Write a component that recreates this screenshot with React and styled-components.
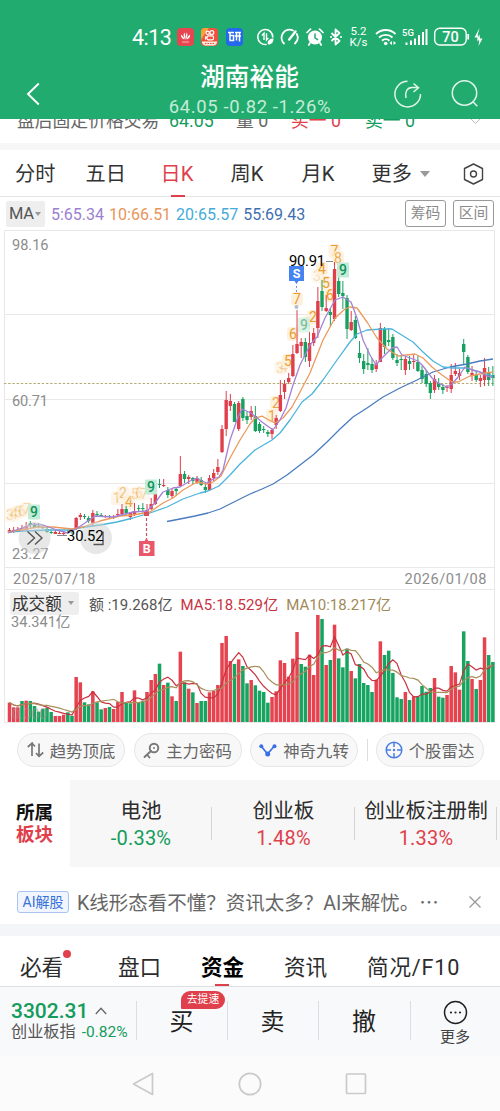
import React from "react";
import styled, { createGlobalStyle } from "styled-components";

const RED = "#e0404c";
const GREEN = "#149c5c";

const GlobalStyle = createGlobalStyle`
  body {
    margin: 0;
    background: #fff;
    font-family: Roboto, "Noto Sans CJK SC", sans-serif;
    color: #333;
    overflow: hidden;
  }
  * {
    box-sizing: border-box;
  }
  svg {
    display: block;
    flex: none;
  }
`;

const Page = styled.div`
  width: 500px;
  height: 1111px;
  display: flex;
  flex-direction: column;
  overflow: hidden;
  white-space: nowrap;
`;

const Header = styled.header`
  height: 119px;
  flex: none;
  background: #22ab6f;
  color: #fff;
  position: relative;
`;

const StatusBar = styled.div`
  height: 60px;
  padding: 14px 0 0 132px;
  display: flex;
  align-items: center;
`;

const StatusItem = styled.div`
  flex: none;
  width: ${(props) => props.$w}px;
  margin-left: ${(props) => props.$ml || 0}px;
`;

const Clock = styled(StatusItem)`
  font-size: 21.5px;
  line-height: 24px;
  letter-spacing: -0.5px;
  padding-top: 1px;
`;

const NetSpeed = styled(StatusItem)`
  font-size: 11.5px;
  line-height: 11px;
  text-align: center;
`;

const TitleRow = styled.div`
  display: grid;
  grid-template-columns: 120px 1fr 120px;
  height: 59px;
`;

const TitleIcons = styled.div`
  display: flex;
  align-items: center;
  gap: 29px;
  padding-top: 8px;
  padding-left: ${(props) => props.$pl}px;
`;

const TitleText = styled.div`
  text-align: center;
`;

const StockName = styled.div`
  font-size: 24.7px;
  line-height: 36px;
  font-weight: 500;
  margin-left: -1px;
`;

const StockQuote = styled.div`
  font-size: 18.4px;
  line-height: 22px;
  letter-spacing: 0.65px;
  color: #c5ecd9;
`;

const AfterHours = styled.div`
  height: 24px;
  flex: none;
  overflow: hidden;
`;

const AfterHoursLine = styled.div`
  margin-top: -12px;
  height: 28px;
  line-height: 28px;
  padding-left: 17px;
  font-size: 17.8px;
  color: #666;
  display: grid;
  grid-template-columns: 152px 67px 55px 74px 104px 1fr;
  align-items: center;
`;

const Tint = styled.span`
  color: ${(props) => props.$c};
  letter-spacing: ${(props) => props.$ls || 0}px;
  margin-left: ${(props) => props.$ml || 0}px;
`;

const Band = styled.div`
  flex: none;
  height: ${(props) => props.$h}px;
  background: ${(props) => props.$bg};
`;

const PeriodTabs = styled.nav`
  flex: none;
  height: 47px;
  border-bottom: 1px solid #e4e4e4;
  padding-left: 15px;
  display: grid;
  grid-template-columns: 70.5px 75px 70px 71px 70px 91.5px 1fr;
  align-items: stretch;
`;

const PeriodTab = styled.div`
  font-size: 20.2px;
  line-height: 46px;
  padding-top: 1px;
  color: ${(props) => (props.$active ? RED : "#333")};
  display: flex;
  align-items: center;
  gap: 8px;
  position: relative;
`;

const Underline = styled.i`
  position: absolute;
  bottom: 0;
  left: ${(props) => props.$left}px;
  width: 14px;
  height: 2px;
  background: ${RED};
`;

const Triangle = styled.i`
  border: ${(props) => props.$s}px solid transparent;
  border-top: ${(props) => props.$s + 1}px solid #999;
  border-bottom: 0;
`;

const MaRow = styled.div`
  flex: none;
  height: 33px;
  padding: 0 6px;
  display: flex;
  align-items: center;
  font-size: 16px;
`;

const MaSelect = styled.div`
  width: 39px;
  height: 26px;
  padding-left: 3px;
  background: #eeeeee;
  border-radius: 2px;
  color: #555;
  display: flex;
  align-items: center;
  gap: 1px;
  margin-right: 6px;
  font-size: 16.5px;
  letter-spacing: -0.3px;
`;

const MaValue = styled.span`
  color: ${(props) => props.$c};
  margin-right: 5px;
  padding-top: 1px;
`;

const OutlineButton = styled.div`
  width: 41px;
  height: 27px;
  margin-left: ${(props) => props.$ml};
  border: 1px solid #999;
  border-radius: 3px;
  color: #8a8a8a;
  font-size: 14.8px;
  line-height: 25px;
  text-align: center;
`;

const VolumeBox = styled.section`
  flex: none;
  height: 133px;
  margin: 0 5px 0 4px;
  border: 1px solid #e8e8e8;
  border-top: 0;
  position: relative;
`;

const VolumeHead = styled.div`
  display: flex;
  align-items: center;
  height: 25px;
  padding: 1px 0 0 5px;
  font-size: 15px;
`;

const VolumeSelect = styled.div`
  width: 69px;
  height: 23px;
  background: #eee;
  border-radius: 3px;
  display: flex;
  align-items: center;
  gap: 6px;
  padding-left: 2px;
  font-size: 16.6px;
  margin-right: 10px;
`;

const VolumeScale = styled.div`
  font-size: 14.6px;
  line-height: 14px;
  padding-left: 6px;
  color: #8c8c8c;
`;

const VolumeSvg = styled.svg`
  position: absolute;
  left: -5px;
  bottom: 0;
`;

const Chips = styled.div`
  flex: none;
  height: 57px;
  padding: 10px 0 0 17px;
  display: flex;
  align-items: flex-start;
`;

const Chip = styled.div`
  width: 108px;
  height: 34px;
  margin-right: 8.5px;
  border: 1px solid #e6e6e6;
  border-radius: 17px;
  background: #f8f8f8;
  color: #666;
  font-size: 16.4px;
  display: flex;
  align-items: center;
  justify-content: center;
  gap: 6px;
`;

const ChipDivider = styled.i`
  width: 1px;
  height: 22px;
  margin: 6px 8px 0 0;
  background: #ddd;
`;

const Sectors = styled.section`
  flex: none;
  height: 87px;
  display: flex;
`;

const SectorLabel = styled.div`
  width: 70px;
  padding: 22px 0 0 16px;
  font-size: 18.6px;
  line-height: 22px;
  font-weight: 700;
  color: #111;
`;

const SectorList = styled.div`
  flex: 1;
  display: flex;
  background: #f7f7f7;
  overflow: hidden;
`;

const Sector = styled.div`
  flex: none;
  width: ${(props) => props.$w}px;
  text-align: center;
  position: relative;
  padding-top: 18px;
  &::after {
    content: "";
    position: absolute;
    right: 0;
    top: 27px;
    width: 1px;
    height: 33px;
    background: #d4d4d4;
  }
`;

const SectorName = styled.div`
  font-size: 20.6px;
  line-height: 27px;
  color: #2c2c2c;
`;

const SectorChange = styled.div`
  font-size: 20px;
  line-height: 26px;
  letter-spacing: 0.2px;
  color: ${(props) => (props.$up ? RED : GREEN)};
`;

const Notice = styled.div`
  flex: none;
  height: 57px;
  padding: 13px 0 0 17px;
  display: flex;
  align-items: center;
  font-size: 19.5px;
  color: #666;
`;

const AiTag = styled.div`
  width: 52px;
  height: 22px;
  border: 1px solid #a9c4f0;
  border-radius: 3px;
  background: #f1f6fe;
  color: #3671d9;
  font-size: 14px;
  line-height: 20px;
  text-align: center;
  margin-right: 8px;
`;

const NoticeText = styled.div`
  width: 392px;
  margin-top: -2px;
`;

const SectionTabs = styled.nav`
  flex: none;
  height: 51px;
  padding: 0 0 0 20px;
  border-bottom: 1px solid #dedfe1;
  display: grid;
  grid-template-columns: 98px 83px 83px 83px 133px;
  grid-template-rows: 50px;
  font-size: 21.6px;
  line-height: 63px;
`;

const SectionTab = styled.div`
  position: relative;
  color: ${(props) => (props.$active ? "#000" : "#2c2c2c")};
  font-weight: ${(props) => (props.$active ? 700 : 400)};
  letter-spacing: ${(props) => props.$ls || 0}px;
`;

const RedDot = styled.i`
  position: absolute;
  left: 43px;
  top: 14px;
  width: 8px;
  height: 8px;
  border-radius: 50%;
  background: ${RED};
`;

const TradeBar = styled.footer`
  flex: none;
  height: 69px;
  background: #f8f9fb;
  display: flex;
`;

const IndexBox = styled.div`
  width: 136px;
  padding: 12px 0 0 11px;
`;

const IndexValue = styled.div`
  display: flex;
  align-items: center;
  gap: 7px;
  height: 24px;
  font-size: 21px;
  font-weight: 500;
  color: ${GREEN};
`;

const IndexName = styled.div`
  font-size: 16.2px;
  line-height: 18px;
  color: #555;
  display: flex;
  align-items: center;
  gap: 6px;
`;

const IndexChange = styled.span`
  font-size: 15.5px;
  color: ${GREEN};
`;

const TradeButton = styled.div`
  width: ${(props) => props.$w}px;
  position: relative;
  font-size: 24px;
  line-height: 70px;
  text-align: center;
  color: #222;
  &::before {
    content: "";
    position: absolute;
    left: 0;
    top: 14px;
    width: 1px;
    height: 39px;
    background: #dcdde0;
  }
`;

const MoreButton = styled(TradeButton)`
  display: flex;
  flex-direction: column;
  align-items: center;
  padding-top: 13px;
  font-size: 15px;
  line-height: 20px;
  color: #444;
  gap: 2px;
`;

const SpeedBadge = styled.span`
  position: absolute;
  left: 45px;
  top: 4px;
  width: 44px;
  height: 18px;
  border-radius: 9px 9px 9px 1px;
  background: ${RED};
  color: #fff;
  font-size: 10.8px;
  line-height: 17px;
`;

const SystemNav = styled.div`
  flex: 1;
  background: #fbfbfc;
  display: flex;
  justify-content: center;
  gap: 82px;
  padding-top: 16px;
`;

// turnover bars, measured down from a base line of 396
const volumes =
  "R338 R352 R352 G333 R332 G333 G348 G365 G357 G353 G366 R378 R378 R374 G367 G378 R261 R277 G337 G343 R304 G337 G358 R354 G351 R357 R336 R306 G336 G340 R301 G338 G332 R306 R270 R252 G221 R285 G278 R319 G333 R185 G278 R296 G307 R339 G333 G333 R307 R303 R285 R159 R138 R213 G222 R208 G228 G280 R270 G286 G302 G306 G338 R321 R304 R211 R219 R260 R206 R126 G222 G230 R194 R255 R75 G87 R225 G210 R104 G205 G232 G176 R243 G265 G222 G279 G285 G306 R269 R154 G195 G182 G249 G322 G327 R306 G330 R319 G319 G288 G305 G294 R264 G320 G323 R315 R228 R247 R299 G124 G213 R267 G297 R270 R142 G195 G216"
    .split(" ")
    .map((v) => ({ up: v[0] === "R", h: (396 - Number(v.slice(1))) / 3 }));

// high, body top, body bottom, low
const candles = [
  "R528,530,533,533 R527,530,532,533 R527,530,531,532 R525,528,531,532 R522,526,530,531 G521,523,525,527 G523,525,527,528 G523,526,527,528 G525,527,528,529 G527,529,532,533",
  "G530,532,533,534 R530,532,534,534 R531,533,534,534 R531,533,534,535 G530,532,533,534 G529,531,532,534 R517,518,529,530 R513,515,517,520 G514,516,517,519 G516,518,521,523",
  "R510,513,523,526 G511,514,515,517 G513,515,516,517 R515,516,517,518 G515,516,517,519 R515,517,518,519 R509,514,515,516 R504,509,514,516 G506,509,513,515 R512,513,517,520",
  "R503,511,515,516 G505,508,509,512 G503,508,509,513 R504,510,513,516 R498,504,509,510 R488,490,504,505 G479,484,485,488 R479,485,486,487 G487,490,495,498 R488,491,496,498",
  "G487,489,491,495 R456,474,486,487 G471,474,479,483 R475,477,479,484 G477,478,481,484 R476,478,482,484 G477,480,485,486 G484,487,490,493 R475,478,490,491 R469,473,478,481",
  "R459,467,472,475 R425,429,452,453 R391,400,429,436 R394,401,406,411 G402,404,422,422 R401,403,429,431 G397,399,418,421 G411,416,420,424 R406,411,417,420 G406,416,431,432",
  "G422,424,431,433 G426,429,430,433 G430,432,434,437 R428,430,434,439 R415,418,425,429 R380,395,411,412 R380,384,392,399 R373,378,382,384 R345,354,376,377 R310,344,353,354",
  "R338,342,346,358 G338,342,357,362 R332,343,361,367 R328,333,343,346 R287,301,328,338 G280,291,307,311 R295,308,311,312 G308,312,315,327 R262,269,319,321 G271,281,294,297",
  "G281,293,296,309 G295,298,329,339 R311,322,330,331 G316,320,338,339 G341,353,358,363 G354,361,369,374 G348,363,365,370 G358,364,370,373 R360,364,369,372 R323,328,362,362",
  "G327,329,347,354 G328,340,342,346 G334,337,358,360 G354,360,363,366 G356,359,360,370 R357,359,370,375 G356,361,364,370 R355,361,362,369 G356,362,371,372 G366,370,379,383",
  "G370,374,384,387 G381,383,393,399 R375,379,390,393 G378,383,387,390 G384,387,390,394 R385,387,388,392 R364,375,389,393 R363,371,374,376 R369,373,376,380 G339,344,352,365",
  "G355,357,372,374 R366,373,375,381 G371,375,380,382 R375,378,381,387 R358,368,380,386 G367,372,380,386 G366,375,378,386",
]
  .join(" ")
  .split(" ")
  .map((c) => ({ up: c[0] === "R", v: c.slice(1).split(",").map(Number) }));

const averages = [
  {
    color: "#4a7cc0",
    pts: "167,521.5 180,519 195,516 208,513 220,509 232,503 250,494 262,489 273,484 287,475 300,465 313,455 327,442 340,429 353,417 367,408 383,397 400,388 417,380 433,372 450,367 467,364 480,361 493,359",
  },
  {
    color: "#4cb4dc",
    pts: "8,532 25,531 50,530 68,530 85,527 100,525 117,522 133,518 150,513 167,507 183,499 200,493 208,491 219,486 230,475 240,464 255,450 272,440 280,433 290,420 302,402 312,394 323,380 337,360 350,342 357,334 367,330 383,329 392,329 400,334 413,342 423,352 433,361 443,367 453,368 467,368 480,372 493,376",
  },
  {
    color: "#ec9a5c",
    pts: "8,532 20,530 37,527 53,527 72,529 83,527 100,521 120,516 133,515 150,512 163,503 173,498 183,490 197,482 207,484 213,482 221,476 230,458 240,440 250,424 255,418 262,416 267,419 275,423 283,418 292,407 300,392 310,373 323,340 335,318 345,309 350,307 357,308 367,322 377,338 387,349 398,356 415,354 423,358 432,367 442,375 452,382 458,382 470,376 480,374 493,372",
  },
  {
    color: "#a482d6",
    pts: "8,533 13,531 25,527 33,524 43,525 57,530 68,533 76,529 85,523 95,516 113,517 133,512 147,511 155,503 163,492 173,488 180,487 190,481 197,478 202,481 207,483 213,479 219,477 223,470 230,440 238,417 242,409 251,413 262,422 273,430 280,420 286,408 293,385 300,365 310,345 317,337 325,318 335,300 343,297 351,302 357,318 363,340 370,355 376,365 382,358 387,353 392,348 397,347 402,355 410,358 418,361 423,366 432,378 438,383 447,387 452,384 458,377 465,367 472,370 480,372 487,376 493,377",
  },
];

// x centre, y centre, digit, opacity
const counts = [
  [10, 515, "3", 0.45],
  [14, 514, "4", 0.45],
  [18, 512, "5", 0.4],
  [22, 511, "6", 0.4],
  [27, 509, "7", 0.4],
  [117, 498, "1", 0.6],
  [123, 493, "2", 0.6],
  [129, 502, "4", 0.9],
  [135, 494, "5", 0.45],
  [139, 493, "6", 0.4],
  [144, 494, "7", 0.4],
  [272, 416, "1", 0.9],
  [276, 403, "2", 0.9],
  [280, 368, "3", 0.4],
  [284, 367, "4", 0.4],
  [288, 361, "5", 1],
  [293, 334, "6", 1],
  [297, 299, "7", 1],
  [309, 322, "1", 0.4],
  [313, 317, "2", 1],
  [317, 276, "3", 0.35],
  [322, 269, "4", 1],
  [326, 283, "5", 1],
  [330, 295, "6", 1],
  [334.5, 251, "7", 1],
  [338, 258, "8", 0.8],
];

const nines = [
  [34, 512, 1],
  [151, 487, 1],
  [304, 325, 0.55],
  [343, 270, 1],
];

const xAt = (i) => 9.5 + i * 4.167;

const movingAverage = (n) =>
  volumes
    .map((_, i) => {
      const part = volumes.slice(Math.max(0, i - n + 1), i + 1);
      const avg = part.reduce((sum, p) => sum + p.h, 0) / part.length;
      return `${xAt(i).toFixed(1)},${(110 - avg).toFixed(1)}`;
    })
    .join(" ");

const AxisText = ({ x, y, w, fill = "#8c8c8c", size = 14.6, children }) => (
  <text x={x} y={y} fill={fill} fontSize={size} textLength={w}>
    {children}
  </text>
);

const PriceChart = () => (
  <svg width="500" height="360" viewBox="0 230 500 360">
    <g stroke="#e8e8e8" fill="none">
      <rect x="4.5" y="230.5" width="490" height="359" />
      <path d="M5 314.5h490M5 399.5h490M5 483.5h490M5 567.5h490" />
    </g>
    <path d="M4 383.5h490" stroke="#b5ab72" strokeDasharray="2.4 1.8" />
    <AxisText x="12" y="250.3" w="36.5">98.16</AxisText>
    <AxisText x="12" y="405.8" w="36">60.71</AxisText>
    <AxisText x="12" y="558.8" w="36.5">23.27</AxisText>
    <AxisText x="13" y="584" w="82.5">2025/07/18</AxisText>
    <AxisText x="404.5" y="584" w="82">2026/01/08</AxisText>

    {counts.map(([x, y, n, o]) => (
      <g key={`${x}-${n}`} opacity={o}>
        <rect x={x - 6} y={y - 7} width="12" height="14" rx="4" fill="#fdf0dc" />
        <text x={x} y={y + 5} fontSize="14" fill="#ea9c2e" textAnchor="middle">
          {n}
        </text>
      </g>
    ))}

    {candles.map(({ up, v }, i) => {
      const x = xAt(i);
      return (
        <g key={i} fill={up ? "#df3f4b" : "#17a05f"}>
          <rect x={x - 0.5} y={v[0]} width="1" height={v[3] - v[0]} />
          <rect x={x - 1.7} y={v[1]} width="3.4" height={v[2] - v[1]} />
        </g>
      );
    })}

    {averages.map((a) => (
      <polyline
        key={a.color}
        points={a.pts}
        fill="none"
        stroke={a.color}
        strokeWidth="1.3"
        strokeLinejoin="round"
      />
    ))}

    {nines.map(([x, y, o]) => (
      <g key={x} opacity={o}>
        <rect x={x - 6} y={y - 7.5} width="12" height="15" rx="1" fill="#c3ecd8" />
        <text
          x={x}
          y={y + 5}
          fontSize="14"
          fontWeight="500"
          fill="#12955a"
          textAnchor="middle"
        >
          9
        </text>
      </g>
    ))}

    <path d="M57 535.5h10M326 261.5h7" stroke="#888" fill="none" />
    <circle cx="34.5" cy="538" r="16" fill="#cfcfcf" fillOpacity="0.5" />
    <circle cx="96" cy="538" r="16" fill="#cfcfcf" fillOpacity="0.5" />
    <path
      d="M27.5 531.5l7 6.5-7 6.5M35 531.5l7 6.5-7 6.5M93.5 544.5h9.500v-13"
      stroke="#555"
      strokeWidth="1.4"
      fill="none"
    />
    <AxisText x="289" y="266" w="36" fill="#000" size={14.8}>
      90.91
    </AxisText>
    <AxisText x="67" y="541" w="36.5" fill="#000" size={14.8}>
      30.52
    </AxisText>

    <path
      d="M146.5 518v21"
      stroke="#c4506a"
      strokeWidth="1.2"
      strokeDasharray="3 2"
    />
    <rect x="144" y="512" width="5" height="4" fill="#d85058" />
    <path d="M139 541h5.500l2-3 2 3h6v15h-15.500z" fill="#e8586a" />
    <text
      x="146.7"
      y="553"
      fontSize="12.5"
      fontWeight="700"
      fill="#fff"
      textAnchor="middle"
    >
      B
    </text>
    <path d="M289 266h15v15h-5.500l-2 3-2-3h-5.500z" fill="#4583f0" />
    <text
      x="296.5"
      y="278"
      fontSize="12.5"
      fontWeight="700"
      fill="#fff"
      textAnchor="middle"
    >
      S
    </text>
    <path d="M296.5 286v6" stroke="#8095cc" strokeDasharray="2 2" />
    <circle cx="296.5" cy="307" r="2" fill="#b4bbd6" />
  </svg>
);

const VolumeChart = () => (
  <VolumeSvg width="500" height="110" viewBox="0 0 500 110">
    {volumes.map(({ up, h }, i) => (
      <rect
        key={i}
        x={xAt(i) - 1.75}
        y={110 - h}
        width="3.5"
        height={h}
        fill={up ? "#e5434f" : "#17a360"}
      />
    ))}
    <polyline
      points={movingAverage(5)}
      fill="none"
      stroke="#c9323f"
      strokeWidth="1.2"
    />
    <polyline
      points={movingAverage(10)}
      fill="none"
      stroke="#a88f5c"
      strokeWidth="1.2"
    />
    <text x="12" y="107" fontSize="14" fill="#9a8f93" fillOpacity="0.6">
      0.000
    </text>
  </VolumeSvg>
);

const StatusIcons = () => (
  <>
    <StatusItem $w={17} $ml={6}>
      <svg width="17" height="18" viewBox="0 0 17 18">
        <rect width="17" height="18" rx="4" fill="#e64650" />
        <path
          d="M8.3 11.500C6.500 9 6.300 6.500 7.200 4.500c1 1.500 1.300 4 1.100 7zM8.800 11.500c-.2-3 .1-5.500 1.100-7 .9 2 .7 4.500-1.100 7zM7.500 11.500C5 10.800 3.800 9 4 6.800c1.800 1 3 2.600 3.500 4.700zM9.600 11.500c2.500-.7 3.700-2.500 3.500-4.700-1.800 1-3 2.600-3.500 4.700z"
          fill="#fff"
        />
        <path d="M5 14h7" stroke="#f6b5b8" />
      </svg>
    </StatusItem>
    <StatusItem $w={17} $ml={7}>
      <svg width="17" height="18" viewBox="0 0 17 18">
        <rect width="17" height="18" rx="4" fill="#f0503c" />
        <path d="M0 12V4a4 4 0 0 1 4-4h4z" fill="#f6a13a" />
        <g fill="none" stroke="#fff" strokeWidth="1.2">
          <circle cx="6.7" cy="4.8" r="1.7" />
          <circle cx="10.8" cy="4.6" r="2" />
          <rect x="6" y="7.8" width="6.5" height="4" rx="1.2" />
          <path d="M6 10L4.5 9v2.5" />
        </g>
        <path d="M1 13.5h15v1a4 4 0 0 1-3 3H4a4 4 0 0 1-3-3z" fill="#fbe9dc" />
        <path d="M4 15.5h9" stroke="#e0503c" strokeDasharray="1.5 1" />
      </svg>
    </StatusItem>
    <StatusItem $w={17} $ml={8}>
      <svg width="17" height="18" viewBox="0 0 17 18">
        <rect width="17" height="18" rx="4" fill="#2468ee" />
        <path
          d="M2 4.5h6M4 4.5v8M3.5 7.5h4v5h-4M9 4.5h6M8.800 8h6.200M10.500 4.500v8M13.500 4.500v9"
          stroke="#fff"
          strokeWidth="1.5"
          fill="none"
        />
      </svg>
    </StatusItem>
    <StatusItem $w={17} $ml={14}>
      <svg width="17" height="18" viewBox="0 0 17 18" fill="none" stroke="#fff">
        <path
          d="M9 16.500A7.500 7.500 0 1 1 15.800 9"
          strokeWidth="1.6"
          strokeLinecap="round"
        />
        <path d="M4.800 7.500L7 5.300V12M9.500 5.300V12l1.800-2" strokeWidth="1.4" />
        <path
          d="M10.500 15.500c0-3 2.300-5 6-5 0 3.800-2 6-5 6z"
          fill="#fff"
          stroke="none"
        />
      </svg>
    </StatusItem>
    <StatusItem $w={19} $ml={6}>
      <svg
        width="19"
        height="18"
        viewBox="0 0 19 18"
        fill="none"
        stroke="#fff"
        strokeWidth="1.8"
        strokeLinecap="round"
      >
        <path d="M4 15.500a8 8 0 0 1 9-13M16.800 6a8 8 0 0 1-1.800 9.500" />
        <path d="M9.2 11.500L15.500 3.500" strokeWidth="2.4" />
      </svg>
    </StatusItem>
    <StatusItem $w={18} $ml={7}>
      <svg width="18" height="18" viewBox="0 0 18 18">
        <path
          d="M1 4.5L4.5 1.2M17 4.5L13.5 1.2M4 15l-1.2 2M14 15l1.2 2"
          stroke="#fff"
          strokeWidth="1.7"
          strokeLinecap="round"
        />
        <circle cx="9" cy="9.5" r="7" fill="#fff" />
        <path
          d="M9 5.5v4.3l3 2"
          stroke="#22ab6f"
          strokeWidth="1.5"
          fill="none"
        />
      </svg>
    </StatusItem>
    <StatusItem $w={12} $ml={6}>
      <svg
        width="12"
        height="18"
        viewBox="0 0 12 18"
        fill="none"
        stroke="#fff"
        strokeWidth="1.8"
      >
        <path d="M1.500 5l8 8L5.500 16.500v-15L9.500 5l-8 8" strokeLinejoin="round" />
        <path d="M1 9h.01M11 9h.01" strokeWidth="2" strokeLinecap="round" />
      </svg>
    </StatusItem>
    <NetSpeed $w={19} $ml={7}>
      5.2
      <br />
      K/s
    </NetSpeed>
    <StatusItem $w={22} $ml={7}>
      <svg width="22" height="18" viewBox="0 0 22 18" fill="none" stroke="#fff">
        <path
          d="M1 6a14 14 0 0 1 19.500 0M4 9.500a10 10 0 0 1 13.500 0M7 12.800a5.500 5.500 0 0 1 7.500 0"
          strokeWidth="1.9"
        />
        <circle cx="10.7" cy="15.5" r="1.8" fill="#fff" stroke="none" />
        <path
          d="M14.500 15l2.500-2v4zM21 15l-2.500-2v4z"
          fill="#fff"
          stroke="none"
        />
      </svg>
    </StatusItem>
    <StatusItem $w={26} $ml={5}>
      <svg width="26" height="18" viewBox="0 0 26 18" fill="#fff">
        <text x="0" y="8" fontSize="9.5" fontWeight="500" textLength="12">
          5G
        </text>
        <path d="M3.500 14.500h2V17h-2zM8 12.500h2V17H8zM12 10.500h2V17h-2zM16 7h2v10h-2zM20 4h2v13h-2zM23.500 1h2v16h-2z" />
      </svg>
    </StatusItem>
    <StatusItem $w={36} $ml={6}>
      <svg width="36" height="20" viewBox="0 0 36 20">
        <rect
          x="0.7"
          y="1.2"
          width="31.5"
          height="16.8"
          rx="5"
          fill="none"
          stroke="#fff"
          strokeWidth="1.4"
        />
        <path d="M34.200 7v5.500" stroke="#fff" strokeWidth="1.8" />
        <text
          x="16.5"
          y="14.8"
          fontSize="14.5"
          fontWeight="500"
          fill="#fff"
          textAnchor="middle"
        >
          70
        </text>
      </svg>
    </StatusItem>
    <StatusItem $w={9} $ml={4}>
      <svg width="9" height="18" viewBox="0 0 9 18" fill="#fff">
        <path d="M5.500 0L.5 9.500h3L3 14l1.500-3.500V7.500h-1zM5.500 6l.5 4.500h2.500L4.500 18l.8-5.500H4z" />
      </svg>
    </StatusItem>
  </>
);

const sectors = [
  { name: "电池", change: "-0.33%", w: 142 },
  { name: "创业板", change: "1.48%", up: true, w: 143 },
  { name: "创业板注册制", change: "1.33%", up: true, w: 142 },
];

const App = () => {
  return (
    <>
      <GlobalStyle />
      <Page>
        <Header>
          <StatusBar>
            <Clock $w={39}>4:13</Clock>
            <StatusIcons />
          </StatusBar>
          <TitleRow>
            <TitleIcons $pl={26}>
              <svg
                width="14"
                height="24"
                viewBox="0 0 14 24"
                fill="none"
                stroke="#fff"
                strokeWidth="1.9"
              >
                <path d="M12.800 1.500L2 12l10.800 10.500" />
              </svg>
            </TitleIcons>
            <TitleText>
              <StockName>湖南裕能</StockName>
              <StockQuote>64.05 -0.82 -1.26%</StockQuote>
            </TitleText>
            <TitleIcons $pl={13}>
              <svg
                width="29"
                height="28"
                viewBox="0 0 29 28"
                fill="none"
                stroke="#e2f5ec"
                strokeWidth="1.5"
              >
                <path d="M14.500 1.300A12.800 12.800 0 1 0 27.500 14" />
                <path d="M13 18c-1.200-6 1-10.500 6-10.500h6M20.500 3.500l5 4.200-5 4.300" />
              </svg>
              <svg
                width="28"
                height="28"
                viewBox="0 0 28 28"
                fill="none"
                stroke="#e2f5ec"
                strokeWidth="1.5"
              >
                <circle cx="13.5" cy="13" r="12.2" />
                <path d="M22 21.800l4.300 4.500" />
              </svg>
            </TitleIcons>
          </TitleRow>
        </Header>

        <AfterHours>
          <AfterHoursLine>
            <span>盘后固定价格交易</span>
            <Tint $c={GREEN}>64.05</Tint>
            <span>量 0</span>
            <Tint $c={RED}>买一 0</Tint>
            <Tint $c={GREEN}>卖一 0</Tint>
            <svg width="13" height="8" viewBox="0 0 13 8" fill="none" stroke="#bbb">
              <path d="M1 1l5.500 5.500L12 1" />
            </svg>
          </AfterHoursLine>
        </AfterHours>
        <Band $h={7} $bg="#f7f7f7" />

        <PeriodTabs>
          <PeriodTab>分时</PeriodTab>
          <PeriodTab>五日</PeriodTab>
          <PeriodTab $active>
            日K
            <Underline $left={10} />
          </PeriodTab>
          <PeriodTab>周K</PeriodTab>
          <PeriodTab>月K</PeriodTab>
          <PeriodTab>
            更多
            <Triangle $s={5} />
          </PeriodTab>
          <PeriodTab>
            <svg
              width="21"
              height="22"
              viewBox="0 0 21 22"
              fill="none"
              stroke="#444"
              strokeWidth="1.4"
            >
              <path
                d="M10.500 1L19.500 5.500v11L10.500 21 1.500 16.500v-11z"
                strokeLinejoin="round"
              />
              <circle cx="10.5" cy="11" r="3" />
            </svg>
          </PeriodTab>
        </PeriodTabs>

        <MaRow>
          <MaSelect>
            MA
            <Triangle $s={3} />
          </MaSelect>
          <MaValue $c="#9a7fd0">5:65.34</MaValue>
          <MaValue $c="#e8955a">10:66.51</MaValue>
          <MaValue $c="#45acd8">20:65.57</MaValue>
          <MaValue $c="#3f6fb0">55:69.43</MaValue>
          <OutlineButton $ml="auto">筹码</OutlineButton>
          <OutlineButton $ml="7px">区间</OutlineButton>
        </MaRow>

        <PriceChart />

        <VolumeBox>
          <VolumeHead>
            <VolumeSelect>
              成交额
              <Triangle $s={3.5} />
            </VolumeSelect>
            <Tint $c="#555">额 :19.268亿</Tint>
            <Tint $c="#c9323f" $ls={0.15} $ml={8}>
              MA5:18.529亿
            </Tint>
            <Tint $c="#a08a58" $ml={8}>
              MA10:18.217亿
            </Tint>
          </VolumeHead>
          <VolumeScale>34.341亿</VolumeScale>
          <VolumeChart />
        </VolumeBox>

        <Chips>
          <Chip>
            <svg
              width="17"
              height="16"
              viewBox="0 0 17 16"
              fill="none"
              stroke="#777"
              strokeWidth="1.7"
            >
              <path d="M.8 5L5 1.200V14M5 1.200L8 4.500M9 11l3 3.300L16.200 10.500M12 14.300V1.500" />
            </svg>
            趋势顶底
          </Chip>
          <Chip>
            <svg
              width="17"
              height="17"
              viewBox="0 0 17 17"
              fill="none"
              stroke="#777"
              strokeWidth="1.9"
            >
              <circle cx="11" cy="6" r="4.3" />
              <path
                d="M8 9L1.500 15M4 12.500l2.500 3M11 6h.01"
                strokeLinecap="round"
              />
            </svg>
            主力密码
          </Chip>
          <Chip>
            <svg width="18" height="14" viewBox="0 0 18 14">
              <path
                d="M2.500 3.500L8.500 11l6.500-7.500"
                stroke="#3a6fe8"
                strokeWidth="1.7"
                fill="none"
              />
              <g fill="#3a6fe8">
                <circle cx="2.3" cy="3.3" r="2" />
                <circle cx="8.7" cy="11" r="2.5" />
                <circle cx="15.5" cy="3.3" r="2" />
              </g>
            </svg>
            神奇九转
          </Chip>
          <ChipDivider />
          <Chip>
            <svg
              width="18"
              height="18"
              viewBox="0 0 18 18"
              fill="none"
              stroke="#4a7de0"
              strokeWidth="1.5"
            >
              <circle cx="9" cy="9" r="7.8" />
              <path d="M9 1v5M9 12v5M1 9h5M12 9h5" />
              <circle cx="9" cy="9" r="1.2" fill="#4a7de0" stroke="none" />
            </svg>
            个股雷达
          </Chip>
        </Chips>

        <Sectors>
          <SectorLabel>
            所属
            <br />
            <Tint $c={RED}>板块</Tint>
          </SectorLabel>
          <SectorList>
            {sectors.map((s) => (
              <Sector key={s.name} $w={s.w}>
                <SectorName>{s.name}</SectorName>
                <SectorChange $up={s.up}>{s.change}</SectorChange>
              </Sector>
            ))}
          </SectorList>
        </Sectors>

        <Notice>
          <AiTag>AI解股</AiTag>
          <NoticeText>K线形态看不懂？资讯太多？AI来解忧。⋯</NoticeText>
          <svg
            width="12"
            height="12"
            viewBox="0 0 12 12"
            stroke="#999"
            strokeWidth="1.3"
          >
            <path d="M.5.5l11 11M11.500.5l-11 11" />
          </svg>
        </Notice>
        <Band $h={12} $bg="#f4f5f9" />

        <SectionTabs>
          <SectionTab>
            必看
            <RedDot />
          </SectionTab>
          <SectionTab>盘口</SectionTab>
          <SectionTab $active>
            资金
            <Underline $left={14} />
          </SectionTab>
          <SectionTab>资讯</SectionTab>
          <SectionTab $ls={0.8}>简况/F10</SectionTab>
        </SectionTabs>

        <TradeBar>
          <IndexBox>
            <IndexValue>
              3302.31
              <svg
                width="12"
                height="8"
                viewBox="0 0 12 8"
                fill="none"
                stroke="#666"
                strokeWidth="1.3"
              >
                <path d="M.8 7L6 1.200 11.200 7" />
              </svg>
            </IndexValue>
            <IndexName>
              创业板指
              <IndexChange>-0.82%</IndexChange>
            </IndexName>
          </IndexBox>
          <TradeButton $w={91}>
            买
            <SpeedBadge>去提速</SpeedBadge>
          </TradeButton>
          <TradeButton $w={91}>卖</TradeButton>
          <TradeButton $w={92}>撤</TradeButton>
          <MoreButton $w={90}>
            <svg width="25" height="25" viewBox="0 0 25 25">
              <circle
                cx="12.5"
                cy="12.5"
                r="11"
                fill="none"
                stroke="#222"
                strokeWidth="1.5"
              />
              <g fill="#222">
                <circle cx="8" cy="12.5" r="1.1" />
                <circle cx="12.5" cy="12.5" r="1.1" />
                <circle cx="17" cy="12.5" r="1.1" />
              </g>
            </svg>
            更多
          </MoreButton>
        </TradeBar>

        <SystemNav>
          <svg
            width="24"
            height="24"
            viewBox="0 0 24 24"
            fill="none"
            stroke="#cacaca"
            strokeWidth="1.7"
          >
            <path d="M20.500 1.500v21L1.500 12z" strokeLinejoin="round" />
          </svg>
          <svg
            width="24"
            height="24"
            viewBox="0 0 24 24"
            fill="none"
            stroke="#cacaca"
            strokeWidth="1.7"
          >
            <circle cx="12" cy="12" r="10.7" />
          </svg>
          <svg
            width="24"
            height="24"
            viewBox="0 0 24 24"
            fill="none"
            stroke="#cacaca"
            strokeWidth="1.7"
          >
            <rect x="2.5" y="2" width="19" height="19.5" rx="1" />
          </svg>
        </SystemNav>
      </Page>
    </>
  );
};

export default App;
